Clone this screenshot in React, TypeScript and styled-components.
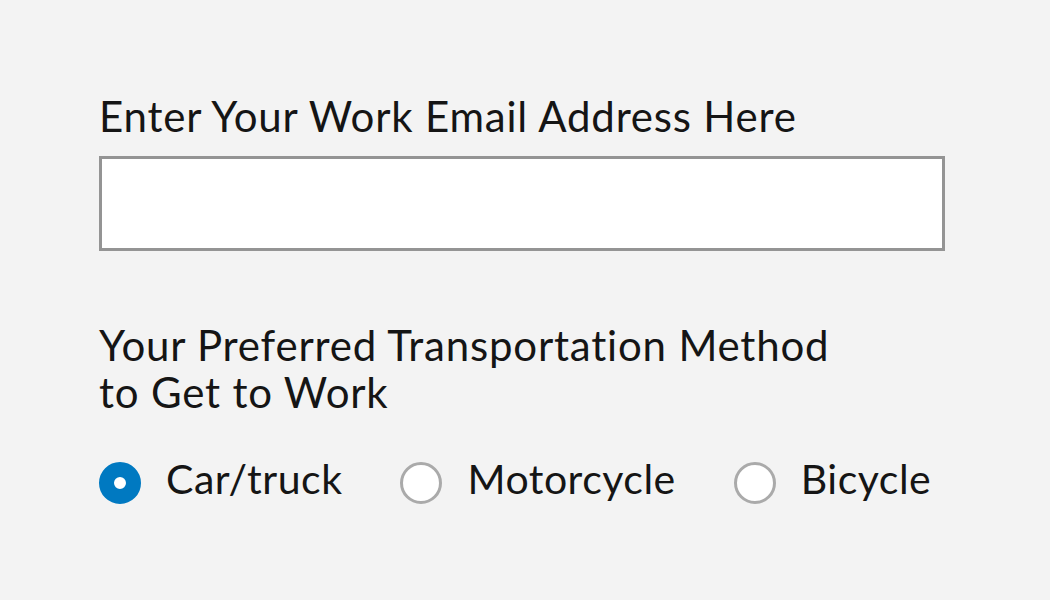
import React from "react";
import styled, { createGlobalStyle } from "styled-components";

const Global = createGlobalStyle`
  html, body {
    margin: 0;
    padding: 0;
    background: #f3f3f3;
  }
  body {
    font-family: Lato, "Noto Sans", "Liberation Sans", sans-serif;
    color: #151515;
  }
`;

const Form = styled.form`
  display: flex;
  flex-direction: column;
  width: 846px;
  padding: 93px 0 0 99px;
`;

const Label = styled.label`
  display: block;
  font-size: 42px;
  line-height: 47px;
  letter-spacing: 0.8px;
  color: #151515;
`;

const TextInput = styled.input`
  box-sizing: border-box;
  display: block;
  width: 846px;
  height: 95px;
  margin: 16px 0 0;
  border: 3px solid #949494;
  background: #ffffff;
  outline: none;
  font: inherit;
  font-size: 34px;
  padding: 0 20px;
`;

const Fieldset = styled.fieldset`
  border: 0;
  margin: 71px 0 0;
  padding: 0;
  min-width: 0;
`;

const Legend = styled(Label).attrs({ as: "legend" })`
  padding: 0;
  max-width: 760px;
`;

const Options = styled.div`
  display: flex;
  align-items: flex-start;
  gap: 58px;
  margin-top: 39px;
`;

const Option = styled.label`
  display: flex;
  align-items: flex-start;
  gap: 25px;
  font-size: 41px;
  line-height: 47px;
  letter-spacing: 0.5px;
  cursor: pointer;
`;

const Radio = styled.input.attrs({ type: "radio" })`
  appearance: none;
  -webkit-appearance: none;
  box-sizing: border-box;
  flex: 0 0 auto;
  width: 42px;
  height: 42px;
  margin: 7px 0 0;
  border-radius: 50%;
  border: 3px solid #aaaaaa;
  background: #ffffff;
  cursor: pointer;

  &:checked {
    border: 15.5px solid #0079c1;
    background: #ffffff;
  }
`;

export default function App() {
  const [method, setMethod] = React.useState("car");
  const options = [
    { value: "car", label: "Car/truck" },
    { value: "motorcycle", label: "Motorcycle" },
    { value: "bicycle", label: "Bicycle" },
  ];
  return (
    <>
      <Global />
      <Form onSubmit={(e) => e.preventDefault()}>
        <Label htmlFor="email">Enter Your Work Email Address Here</Label>
        <TextInput id="email" type="email" />
        <Fieldset>
          <Legend>
            Your Preferred Transportation Method to Get to Work
          </Legend>
          <Options>
            {options.map((o) => (
              <Option key={o.value}>
                <Radio
                  name="method"
                  value={o.value}
                  checked={method === o.value}
                  onChange={() => setMethod(o.value)}
                />
                <span>{o.label}</span>
              </Option>
            ))}
          </Options>
        </Fieldset>
      </Form>
    </>
  );
}
